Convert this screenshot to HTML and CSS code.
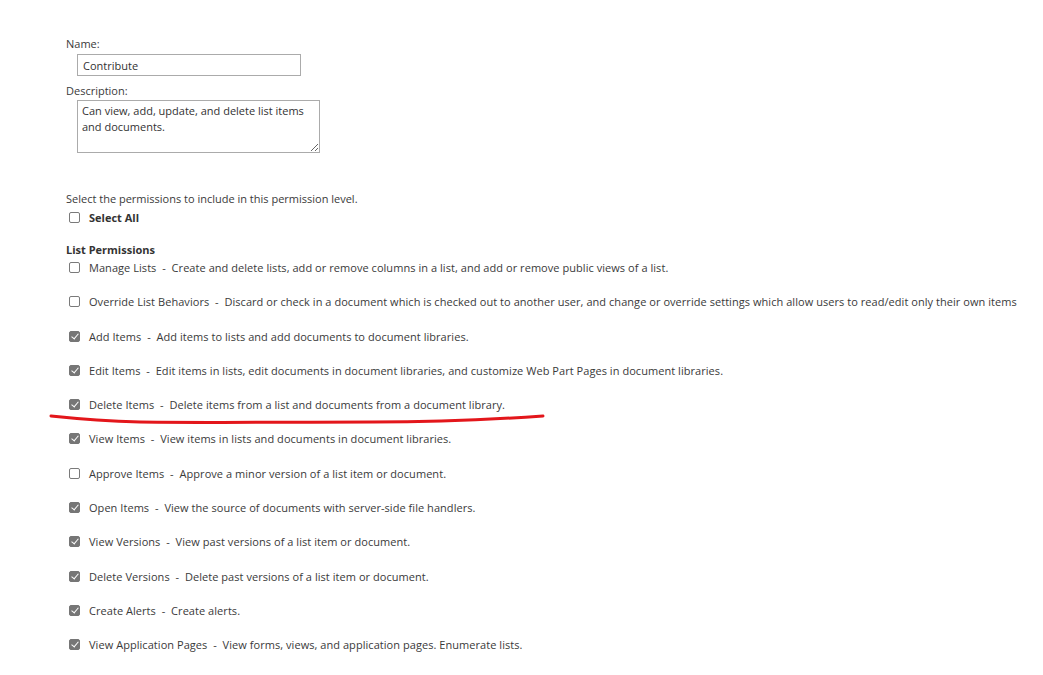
FILE: index.html
```html
<!DOCTYPE html>
<html lang="en">
<head>
    <meta charset="UTF-8">
    <title>Edit Permission Level</title>
    <link rel="stylesheet" href="styles.css">
</head>
<body>

<div class="page">
    <!-- name and description -->
    <div class="label">Name:</div>
    <input type="text" class="name-input" value="Contribute">
    <div class="label desc-label">Description:</div>
    <textarea class="desc-input">Can view, add, update, and delete list items and documents.</textarea>

    <!-- permissions -->
    <div class="intro">Select the permissions to include in this permission level.</div>
    <div class="row select-all">
        <span class="box"></span>
        <b>Select All</b>
    </div>

    <div class="group-title">List Permissions</div>

    <div class="perms">
        <div class="row"><span class="box"></span><span>Manage Lists&nbsp; - &nbsp;Create and delete lists, add or remove columns in a list, and add or remove public views of a list.</span></div>
        <div class="row"><span class="box"></span><span>Override List Behaviors&nbsp; - &nbsp;Discard or check in a document which is checked out to another user, and change or override settings which allow users to read/edit only their own items</span></div>
        <div class="row"><span class="box checked"></span><span>Add Items&nbsp; - &nbsp;Add items to lists and add documents to document libraries.</span></div>
        <div class="row"><span class="box checked"></span><span>Edit Items&nbsp; - &nbsp;Edit items in lists, edit documents in document libraries, and customize Web Part Pages in document libraries.</span></div>
        <div class="row"><span class="box checked"></span><span>Delete Items&nbsp; - &nbsp;Delete items from a list and documents from a document library.</span></div>
        <div class="row"><span class="box checked"></span><span>View Items&nbsp; - &nbsp;View items in lists and documents in document libraries.</span></div>
        <div class="row"><span class="box"></span><span>Approve Items&nbsp; - &nbsp;Approve a minor version of a list item or document.</span></div>
        <div class="row"><span class="box checked"></span><span>Open Items&nbsp; - &nbsp;View the source of documents with server-side file handlers.</span></div>
        <div class="row"><span class="box checked"></span><span>View Versions&nbsp; - &nbsp;View past versions of a list item or document.</span></div>
        <div class="row"><span class="box checked"></span><span>Delete Versions&nbsp; - &nbsp;Delete past versions of a list item or document.</span></div>
        <div class="row"><span class="box checked"></span><span>Create Alerts&nbsp; - &nbsp;Create alerts.</span></div>
        <div class="row"><span class="box checked"></span><span>View Application Pages&nbsp; - &nbsp;View forms, views, and application pages. Enumerate lists.</span></div>
    </div>
</div>

<!-- hand drawn underline -->
<svg class="scribble" width="1043" height="675" viewBox="0 0 1043 675">
    <path d="M51 416 C 70 418, 100 421, 140 422 C 220 423, 300 422, 373 422 C 440 422, 500 419, 543 416" fill="none" stroke="#e3161b" stroke-width="3" stroke-linecap="round"/>
</svg>

</body>
</html>
```

FILE: styles.css
```css
/* page */
body {
    margin: 0;
    font-family: "Open Sans", "Noto Sans", sans-serif;
    font-size: 11px;
    color: #3a3a3a;
    background-color: #fff;
}

.page {
    padding: 36px 0 0 66px;
}

.label {
    line-height: 15px;
}

.name-input {
    display: block;
    box-sizing: border-box;
    margin: 3px 0 0 11px;
    width: 224px;
    height: 22px;
    padding: 0 5px;
    border: 1px solid #ababab;
    font-family: inherit;
    font-size: 11px;
    color: #333;
}

.desc-label {
    margin-top: 7px;
}

.desc-input {
    display: block;
    box-sizing: border-box;
    margin: 2px 0 0 11px;
    width: 243px;
    height: 53px;
    padding: 2px 4px;
    border: 1px solid #ababab;
    font-family: inherit;
    font-size: 11px;
    line-height: 16px;
    color: #333;
    resize: both;
}

.intro {
    margin-top: 38px;
    line-height: 15px;
}

/* checkbox rows */
.row {
    display: flex;
    align-items: center;
    height: 15px;
    line-height: 15px;
    white-space: nowrap;
    letter-spacing: 0.05px;
}

.select-all {
    margin-top: 4px;
}

.select-all b {
    color: #333;
    letter-spacing: 0;
}

.group-title {
    margin-top: 17px;
    font-weight: bold;
    color: #333;
    line-height: 15px;
}

.perms {
    display: flex;
    flex-direction: column;
    gap: 19.3px;
    margin-top: 3px;
}

.box {
    box-sizing: border-box;
    flex: none;
    width: 11px;
    height: 11px;
    margin: 0 9px 0 3px;
    border: 1px solid #7a7a7a;
    border-radius: 2px;
    background-color: #fff;
    position: relative;
}

.box.checked {
    background-color: #767676;
    border-color: #767676;
}

.box.checked::after {
    content: "";
    position: absolute;
    left: 3px;
    top: 0px;
    width: 3px;
    height: 6px;
    border: solid #fff;
    border-width: 0 1.5px 1.5px 0;
    transform: rotate(40deg);
}

.scribble {
    position: absolute;
    left: 0;
    top: 0;
    pointer-events: none;
}
```
